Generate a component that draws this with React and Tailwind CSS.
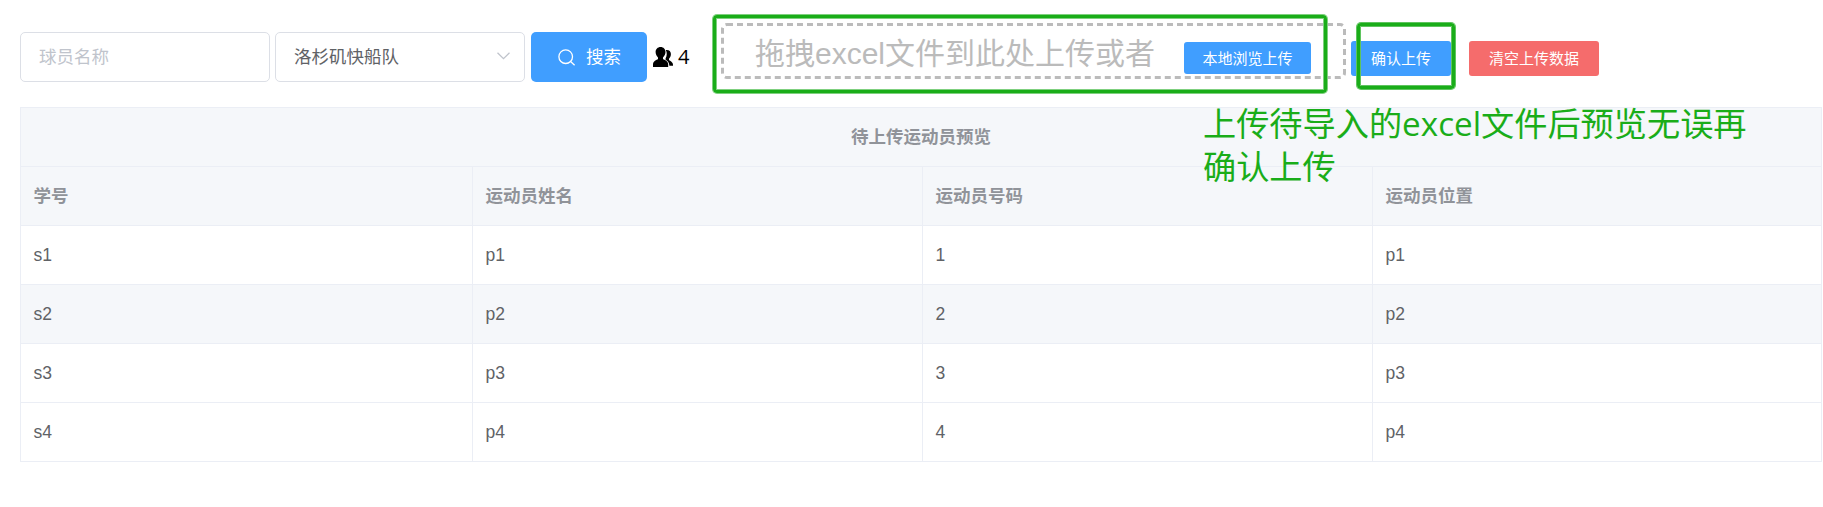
import React from "react";

const columns = ["学号", "运动员姓名", "运动员号码", "运动员位置"];
const rows = [
  ["s1", "p1", "1", "p1"],
  ["s2", "p2", "2", "p2"],
  ["s3", "p3", "3", "p3"],
  ["s4", "p4", "4", "p4"],
];

function Toolbar() {
  return (
    <div className="flex h-[75px] items-start">
      <div className="mt-8 flex h-[50px] w-[250px] items-center rounded-[5px] border border-[#dcdfe6] pt-px pl-[18px] text-[17.5px] text-[#c0c4cc]">
        球员名称
      </div>
      <div className="mt-8 ml-[5px] flex h-[50px] w-[250px] items-center justify-between rounded-[5px] border border-[#dcdfe6] pr-[14px] pl-[18px] text-[17.5px] text-[#606266]">
        <span className="pt-px">洛杉矶快船队</span>
        <svg width="13" height="8" viewBox="0 0 13 8" fill="none" stroke="#c0c4cc" strokeWidth="1.3" className="-mt-0.5">
          <path d="M.5.7l6 6 6-6" />
        </svg>
      </div>
      <button className="mt-8 ml-[6px] flex h-[50px] w-[116px] items-center rounded-[5px] bg-[#409eff] pt-px pl-[27px] text-[17.5px] text-white">
        <svg width="18" height="18" viewBox="0 0 18 18" fill="none" stroke="currentColor" strokeWidth="1.3">
          <circle cx="7.7" cy="7.7" r="6.8" />
          <path d="M12.600 12.600l4 3.700" />
        </svg>
        <span className="ml-[10px]">搜索</span>
      </button>
      <div className="mt-8 ml-[6px] flex h-[50px] w-[68px] items-center text-black">
        <svg width="20" height="20" viewBox="0 0 20 20" fill="currentColor">
          <path d="M7.6 0C4.7 0 2.600 2.200 2.600 5c0 2.200 1 4.200 2.400 5.400v1.700C3.600 13.300 0 14 0 17.500V20h15.200v-2.500c0-3.500-3.600-4.200-5.200-5.400v-1.700C11.400 9.200 12.500 7.200 12.500 5c0-2.800-2-5-4.900-5z" />
          <path d="M12.800 3.100c.5-.1.700-.1 1-.1 2.600 0 4.100 1.600 4.100 4.100 0 2-.8 3.600-1.900 4.600v1.300c1.300 1.200 4 2.100 4 4.700v1h-3.600c-.2-3.200-1.600-4.700-3.800-6v-1.400c1.300-2.100 1.700-5.500.2-8.200z" />
        </svg>
        <span className="ml-[5px] font-['Open_Sans',sans-serif] text-[20px] leading-none">4</span>
      </div>
      <div className="relative mt-[23px] flex h-14 w-[625px] items-start pl-[34px]">
        <svg width="625" height="56" fill="none" className="absolute inset-0">
          <rect x="1.5" y="1.5" width="622" height="53" rx="4.5" stroke="#bbb" strokeWidth="3" strokeDasharray="6 4" />
        </svg>
        <span className="mt-[5.5px] w-[429px] text-[30px] leading-[50px] whitespace-nowrap text-[#bbb]">
          拖拽excel文件到此处上传或者
        </span>
        <button className="mt-[19px] h-8 w-[127px] rounded-[3px] bg-[#409eff] pt-px text-[15px] leading-8 text-white">本地浏览上传</button>
      </div>
      <button className="mt-[41px] ml-[5px] h-[35px] w-[100px] rounded-[3px] bg-[#409eff] text-[15px] leading-[35px] text-white">
        确认上传
      </button>
      <button className="mt-[41px] ml-[18px] h-[35px] w-[130px] rounded-[3px] bg-[#f56c6c] text-[15px] leading-[35px] text-white">
        清空上传数据
      </button>
    </div>
  );
}

function PreviewTable() {
  return (
    <table className="mt-8 w-[1801px] table-fixed border-collapse text-left text-[17.5px]">
      <colgroup>
        <col className="w-[452px]" />
        <col className="w-[450px]" />
        <col className="w-[450px]" />
        <col className="w-[449px]" />
      </colgroup>
      <thead className="bg-[#f5f7fa] text-[#909399]">
        <tr className="h-[59px]">
          <th colSpan={4} className="border border-[#ebeef5] p-0 text-center font-bold">待上传运动员预览</th>
        </tr>
        <tr className="h-[59px]">
          {columns.map((c) => (
            <th key={c} className="border border-[#ebeef5] p-0 pl-[12.500px] font-bold">{c}</th>
          ))}
        </tr>
      </thead>
      <tbody className="text-[#606266]">
        {rows.map((r) => (
          <tr key={r[0]} className={r[0] === "s2" ? "h-[59px] bg-[#f5f7fa]" : "h-[59px]"}>
            {r.map((v, i) => (
              <td key={i} className="border border-[#ebeef5] p-0 pl-[12.500px]">{v}</td>
            ))}
          </tr>
        ))}
      </tbody>
    </table>
  );
}

export default function App() {
  return (
    <div className="relative h-[507px] w-[1823px] overflow-hidden bg-white pl-5 font-['Liberation_Sans','Noto_Sans_CJK_SC',sans-serif]">
      <Toolbar />
      <PreviewTable />
      <div className="absolute top-[15px] left-[713px] h-[78px] w-[614px] rounded-[4px] border-[3px] border-[#1aad19] shadow-[0_0_0_1px_#7fd07f,inset_0_0_0_1px_#7fd07f]" />
      <div className="absolute top-[23px] left-[1357px] h-[66px] w-[98px] rounded-[4px] border-[3px] border-[#1aad19] shadow-[0_0_0_1px_#5fc45f,inset_0_0_0_1px_#5fc45f]" />
      <p className="absolute top-[102px] left-[1203px] font-['Open_Sans','Noto_Sans_CJK_SC',sans-serif] text-[33.200px] leading-[43px] whitespace-nowrap text-[#1aad19]">
        上传待导入的excel文件后预览无误再
        <br />
        确认上传
      </p>
    </div>
  );
}
